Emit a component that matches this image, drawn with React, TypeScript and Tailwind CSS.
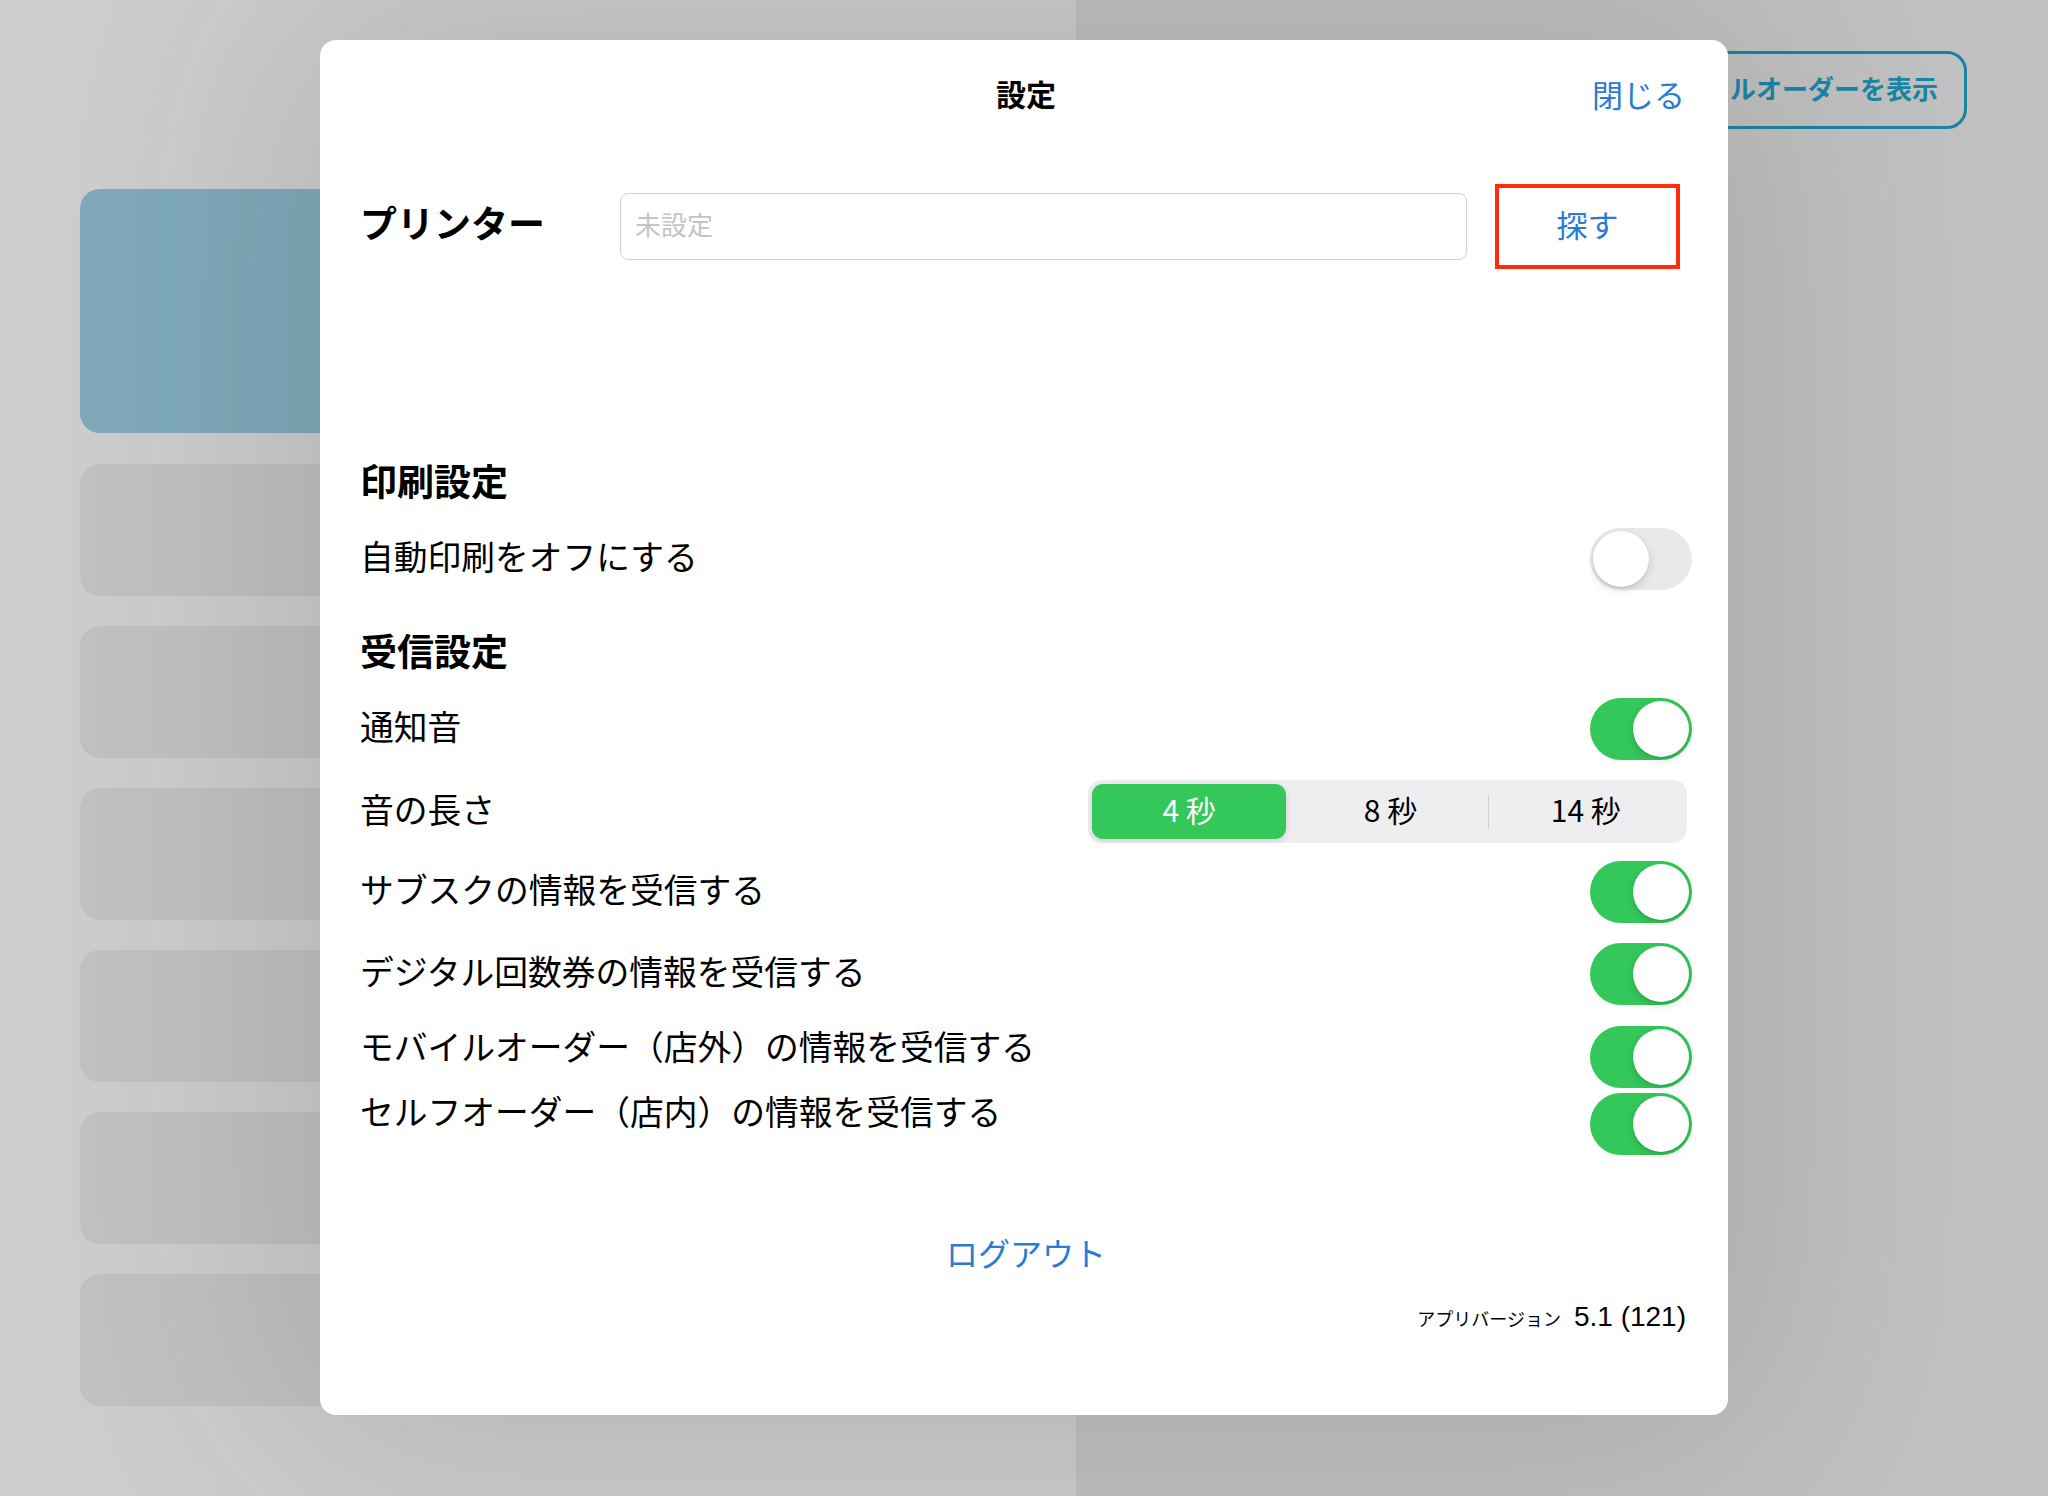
import React from 'react';

const Toggle = ({ on }: { on: boolean }) => (
  <div
    className={`w-[102px] h-[62px] rounded-full p-[3px] flex shrink-0 ${
      on ? 'bg-[#34c759] justify-end' : 'bg-[#e9e9eb] justify-start'
    }`}
  >
    <div className="w-[56px] h-[56px] rounded-full bg-white shadow-[0_3px_8px_rgba(0,0,0,0.15),0_1px_1px_rgba(0,0,0,0.1)]" />
  </div>
);

const Row = ({
  label,
  children,
  className = '',
  labelClass = 'pb-[6px]',
}: {
  label: string;
  children: React.ReactNode;
  className?: string;
  labelClass?: string;
}) => (
  <div className={`flex items-center justify-between ${className}`}>
    <span className={`text-[33.75px] leading-none text-black ${labelClass}`}>{label}</span>
    {children}
  </div>
);

const Segment = () => {
  return (
    <div className="w-[599px] h-[63px] mr-[5px] bg-[#eeeef0] rounded-[14px] p-[4px] flex items-stretch">
      <div className="flex-1 flex pr-[7px]">
        <div className="flex-1 rounded-[11px] bg-[#34c759] shadow-[0_2px_6px_rgba(0,0,0,0.12)] flex items-center justify-center pb-[6px] text-white text-[30px] leading-none">
          4 秒
        </div>
      </div>
      <div className="flex-1 flex items-center justify-center pb-[6px] text-black text-[30px] leading-none">8 秒</div>
      <div className="w-px h-[34px] self-center bg-[#d2d2d6]" />
      <div className="flex-1 flex items-center justify-center pb-[6px] text-black text-[30px] leading-none">14 秒</div>
    </div>
  );
};

export default function App() {
  return (
    <div className="relative flex h-[1496px] w-[2048px] overflow-hidden font-['Noto_Sans_CJK_JP',sans-serif]">
      {/* left list panel */}
      <div className="w-[1076px] bg-[#cecece] pt-[189px] px-[80px] flex flex-col gap-[30px]">
        <div className="h-[244px] mb-px rounded-[20px] bg-[#80abbc]" />
        {[0, 1, 2, 3, 4, 5].map((i) => (
          <div key={i} className="h-[132px] rounded-[20px] bg-[#c2c2c2]" />
        ))}
      </div>

      {/* right panel, button partly under the modal */}
      <div className="flex-1 bg-[#c2c2c2] flex justify-end items-start pt-[51px] pr-[81px]">
        <div className="h-[78px] pl-[130px] pr-[26px] rounded-[20px] border-[3px] border-[#1a85a3] flex items-center pb-[4px] text-[26px] font-bold leading-none text-[#1a87a6] whitespace-nowrap">
          ルオーダーを表示
        </div>
      </div>

      {/* settings modal */}
      <div className="absolute left-[320px] top-[40px] w-[1408px] h-[1375px] bg-white rounded-[16px] pl-[40px] pr-[36px] flex flex-col shadow-[0_0_320px_40px_rgba(30,35,30,0.16)]">
        <div className="h-[110px] grid grid-cols-[1fr_auto_1fr] items-center">
          <div />
          <div className="text-[30px] font-bold leading-none text-black pb-[4px]">設定</div>
          <div className="flex justify-end pr-[7px] pb-[4px] text-[31px] leading-none text-[#2a7ad6]">閉じる</div>
        </div>

        <div className="mt-[34px] h-[85px] flex items-center">
          <div className="w-[260px] pb-[8px] text-[37px] font-bold leading-none text-black">プリンター</div>
          <div className="w-[847px] h-[67px] border border-[#d0d0d0] rounded-[8px] px-[14px] pb-[6px] flex items-center text-[26px] leading-none text-[#c4c4c4]">
            未設定
          </div>
          <div className="ml-[28px] w-[185px] h-[85px] border-[4px] border-[#ff2d0a] flex items-center justify-center pb-[6px] text-[31px] leading-none text-[#2a7ad6]">
            探す
          </div>
        </div>

        <div className="mt-[189px] h-[50px] pb-[6px] flex items-center text-[37px] font-bold leading-none text-black">印刷設定</div>
        <Row label="自動印刷をオフにする" className="mt-[20px] h-[62px]">
          <Toggle on={false} />
        </Row>

        <div className="mt-[38px] h-[50px] pb-[6px] flex items-center text-[37px] font-bold leading-none text-black">受信設定</div>
        <Row label="通知音" className="mt-[20px] h-[62px]">
          <Toggle on />
        </Row>
        <Row label="音の長さ" className="mt-[20px] h-[63px]">
          <Segment />
        </Row>
        <Row label="サブスクの情報を受信する" className="mt-[18px] h-[62px]">
          <Toggle on />
        </Row>
        <Row label="デジタル回数券の情報を受信する" className="mt-[20px] h-[62px]">
          <Toggle on />
        </Row>
        <Row label="モバイルオーダー（店外）の情報を受信する" className="mt-[21px] h-[62px]" labelClass="pb-[22px]">
          <Toggle on />
        </Row>
        <Row label="セルフオーダー（店内）の情報を受信する" className="mt-[5px] h-[62px]" labelClass="pb-[26px]">
          <Toggle on />
        </Row>

        <div className="mt-[75px] h-[50px] pb-[6px] flex items-center justify-center text-[32px] leading-none text-[#2a7ad6]">
          ログアウト
        </div>

        <div className="mt-[23px] h-[40px] pr-[6px] flex justify-end items-baseline gap-[13px] text-black">
          <span className="text-[18px] leading-none">アプリバージョン</span>
          <span className="text-[28px] leading-none font-['Liberation_Sans',sans-serif]">5.1 (121)</span>
        </div>
      </div>
    </div>
  );
}
